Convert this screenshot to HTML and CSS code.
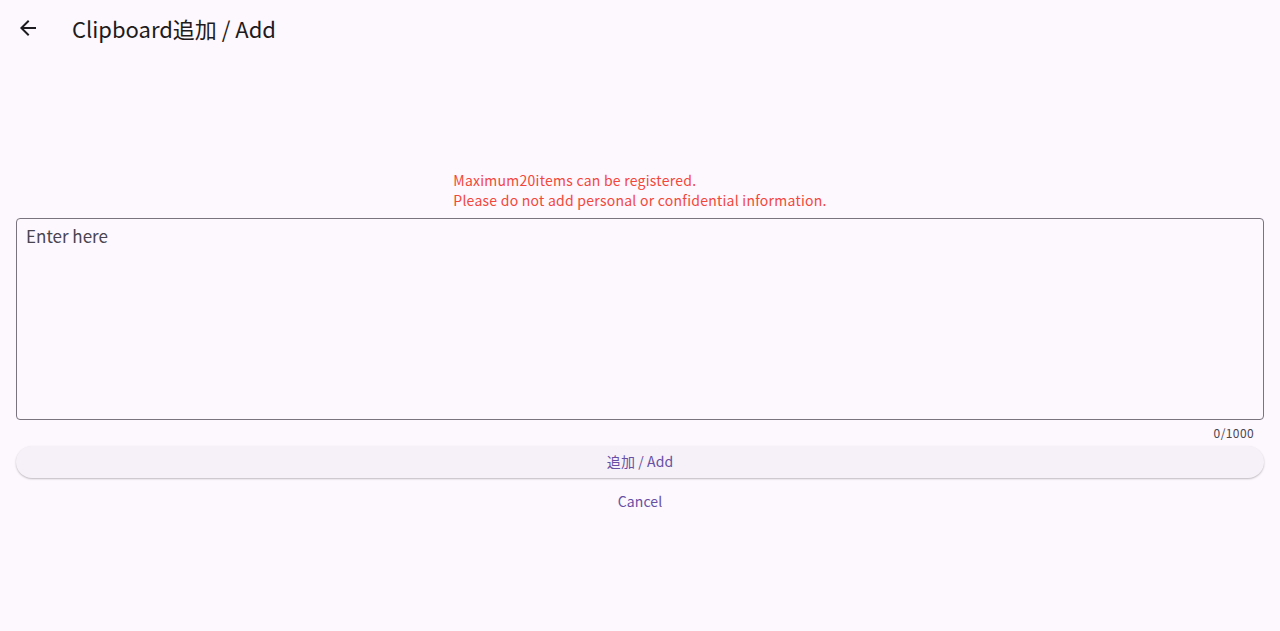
FILE: index.html
```html
<!DOCTYPE html>
<html lang="ja">
<head>
<meta charset="utf-8">
<link rel="stylesheet" href="styles.css">
</head>
<body>
<div class="app">
  <header class="topbar">
    <button class="back" aria-label="back">
      <svg width="24" height="24" viewBox="0 0 24 24"><path d="M20 11H7.83l5.59-5.59L12 4l-8 8 8 8 1.41-1.41L7.83 13H20v-2z" fill="#1d1b20"/></svg>
    </button>
    <h1 class="title">Clipboard追加 / Add</h1>
  </header>
  <main class="content">
    <div class="notice">
      <p>Maximum20items can be registered.</p>
      <p>Please do not add personal or confidential information.</p>
    </div>
    <div class="field">
      <span class="placeholder">Enter here</span>
    </div>
    <div class="counter">0/1000</div>
    <button class="add">追加 / Add</button>
    <button class="cancel">Cancel</button>
  </main>
</div>
</body>
</html>
```
FILE: styles.css
```css
* { box-sizing: border-box; }
html, body { margin: 0; padding: 0; }
body {
  background: #fdf7fe;
  font-family: "Noto Sans CJK JP", "Noto Sans", sans-serif;
  color: #1d1b20;
  width: 1280px;
  height: 631px;
  overflow: hidden;
}
.topbar {
  height: 60px;
  display: flex;
  align-items: center;
  padding-left: 16px;
}
.back {
  width: 24px;
  height: 24px;
  padding: 0;
  border: none;
  background: none;
  display: flex;
  margin-top: -4px;
}
.title {
  margin: -4px 0 0 32px;
  font-size: 22px;
  font-weight: 400;
  line-height: 28px;
  color: #1d1b20;
}
.content {
  padding: 110px 16px 0;
  display: flex;
  flex-direction: column;
}
.notice {
  align-self: center;
  color: #f2483b;
  font-size: 14px;
  letter-spacing: 0.25px;
  line-height: 20px;
}
.notice p { margin: 0; }
.field {
  margin-top: 8px;
  height: 202px;
  border: 1px solid #79747e;
  border-radius: 4px;
  padding: 5px 9px 9px;
}
.placeholder {
  font-size: 17px;
  line-height: 22px;
  color: #49454f;
}
.counter {
  align-self: flex-end;
  margin-right: 10px;
  font-size: 12px;
  letter-spacing: 0.4px;
  line-height: 14px;
  margin-top: 6px;
  color: #49454f;
}
.add {
  margin-top: 6px;
  height: 32px;
  padding: 0 0 2px;
  border: none;
  border-radius: 16px;
  background: #f6f1f8;
  box-shadow: 0 1px 2px rgba(0,0,0,0.25);
  color: #6750a4;
  font-family: inherit;
  font-size: 14px;
  letter-spacing: 0.1px;
}
.cancel {
  align-self: center;
  margin-top: 3px;
  height: 40px;
  border: none;
  background: none;
  padding: 0 12px;
  color: #6750a4;
  font-family: inherit;
  font-size: 14px;
  letter-spacing: 0.1px;
}
```
